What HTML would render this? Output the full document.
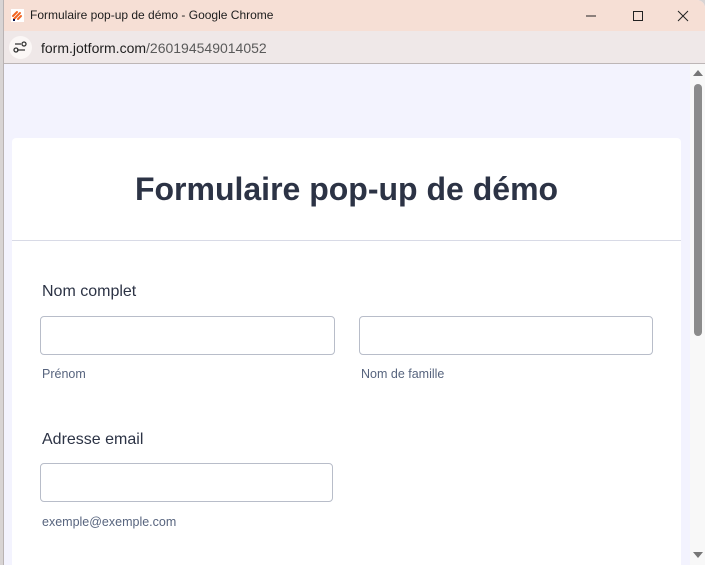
<!DOCTYPE html>
<html><head><meta charset="utf-8"><style>
*{margin:0;padding:0;box-sizing:border-box}
body{width:705px;height:565px;overflow:hidden;font-family:"Liberation Sans",sans-serif;background:#d8d4d4;position:relative}
.win{position:absolute;left:3px;top:0;width:702px;height:565px;background:#f3f3fe;border-left:1px solid #b9b3b3;border-top-right-radius:8px;overflow:hidden}
.tb{position:absolute;left:0;top:0;width:100%;height:31px;background:#f6dfd5}
.tb .t{position:absolute;left:26px;top:8px;font-size:12px;color:#1d1d1d}
.ab{position:absolute;left:0;top:31px;width:100%;height:33px;background:#efe8e8;border-bottom:1px solid #bdb6b6}
.ab .u{position:absolute;left:37px;top:9px;font-size:14px;color:#1f1f1f}
.ab .u span{color:#5a5a5a}
.ic{position:absolute;left:5px;top:5px;width:23px;height:23px;border-radius:50%;background:#fbf7f6}
.card{position:absolute;left:8px;top:138px;width:669px;height:440px;background:#fff;border-radius:4px}
.h{position:absolute;left:0;top:0;width:100%;height:103px;border-bottom:1px solid #d8dae6;text-align:center}
.h div{padding-top:33px;font-size:32px;font-weight:bold;color:#2c3345}
.lbl{position:absolute;font-size:16px;color:#2c3345}
.in{position:absolute;border:1px solid #b8bdc9;border-radius:4px;height:39px;background:#fff}
.sub{position:absolute;font-size:12.5px;color:#57647e}
.sb{position:absolute;left:686px;top:64px;width:16px;height:501px;background:#f8f8f8}
.th{position:absolute;left:4px;top:20px;width:8px;height:252px;background:#8b8b8b;border-radius:4px}
</style></head><body>
<div class="win">
<div class="tb">
<svg style="position:absolute;left:7px;top:9px" width="13" height="13" viewBox="0 0 13 13"><rect width="13" height="13" fill="#fff"/><path d="M2 7l4-4M3 10l6-6M7 10l3-3" stroke="#f26522" stroke-width="2" stroke-linecap="round"/><path d="M2 11l2 0" stroke="#0a1551" stroke-width="2"/></svg>
<div class="t">Formulaire pop-up de démo - Google Chrome</div>
<svg style="position:absolute;left:582px;top:10px" width="110" height="12"><path d="M0 6h10" stroke="#222" stroke-width="1"/><rect x="47.5" y="1.5" width="9" height="9" fill="none" stroke="#222"/><path d="M92 1l10 10M102 1l-10 10" stroke="#222"/></svg>
</div>
<div class="ab"><div class="ic"><svg width="23" height="23"><path d="M6 8h6M8 14h8" stroke="#333" stroke-width="1.3"/><circle cx="15" cy="8" r="2" fill="none" stroke="#333" stroke-width="1.3"/><circle cx="7" cy="14" r="2" fill="none" stroke="#333" stroke-width="1.3"/></svg></div><div class="u">form.jotform.com<span>/260194549014052</span></div></div>
<div class="card">
<div class="h"><div>Formulaire pop-up de démo</div></div>
<div class="lbl" style="left:30px;top:145px">Nom complet</div>
<div class="in" style="left:28px;top:178px;width:295px"></div>
<div class="in" style="left:347px;top:178px;width:294px"></div>
<div class="sub" style="left:30px;top:229px">Prénom</div>
<div class="sub" style="left:349px;top:229px">Nom de famille</div>
<div class="lbl" style="left:30px;top:293px">Adresse email</div>
<div class="in" style="left:28px;top:325px;width:293px"></div>
<div class="sub" style="left:30px;top:377px">exemple@exemple.com</div>
</div>
<div class="sb"><svg style="position:absolute;left:3px;top:5px" width="10" height="8"><path d="M0 7L5 1L10 7Z" fill="#777"/></svg><div class="th"></div><svg style="position:absolute;left:3px;top:487px" width="10" height="8"><path d="M0 1L5 7L10 1Z" fill="#777"/></svg></div>
</div>
</body></html>
